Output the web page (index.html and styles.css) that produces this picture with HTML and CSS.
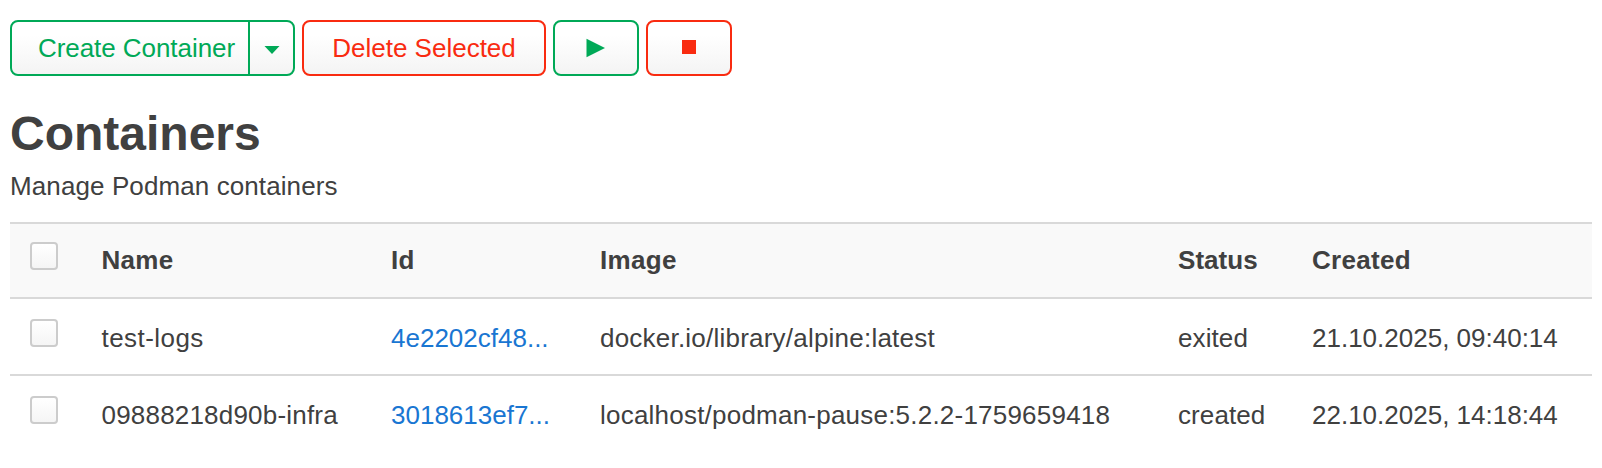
FILE: index.html
```html
<!DOCTYPE html>
<html lang="en">
<head>
<meta charset="utf-8">
<title>Containers</title>
<link rel="stylesheet" href="styles.css">
</head>
<body>
<main class="page">
  <div class="toolbar">
    <div class="btn btn-positive split">
      <span class="split-label">Create Container</span>
      <span class="split-toggle"><svg width="16" height="8" viewBox="0 0 16 8"><path d="M0.5 0H15.5L8 8Z" fill="currentColor"/></svg></span>
    </div>
    <div class="btn btn-negative btn-text">Delete Selected</div>
    <div class="btn btn-positive btn-icon"><svg width="20" height="20" viewBox="0 0 20 20"><path d="M0.5 0.8V19.2L19 10Z" fill="currentColor"/></svg></div>
    <div class="btn btn-negative btn-icon"><svg width="20" height="20" viewBox="0 0 20 20"><path d="M3 2H17V16H3Z" fill="currentColor"/></svg></div>
  </div>
  <h1 class="title">Containers</h1>
  <p class="description">Manage Podman containers</p>
  <div class="table">
    <div class="row row-head">
      <span class="check"></span><span>Name</span><span>Id</span><span>Image</span><span class="status-head">Status</span><span>Created</span>
    </div>
    <div class="row">
      <span class="check"></span><span class="name-short">test-logs</span><a class="link">4e2202cf48...</a><span class="image">docker.io/library/alpine:latest</span><span class="status">exited</span><span>21.10.2025, 09:40:14</span>
    </div>
    <div class="row">
      <span class="check"></span><span class="name">09888218d90b-infra</span><a class="link">3018613ef7...</a><span class="image">localhost/podman-pause:5.2.2-1759659418</span><span class="status">created</span><span>22.10.2025, 14:18:44</span>
    </div>
  </div>
</main>
</body>
</html>
```
FILE: styles.css
```css
* { box-sizing: border-box; }
body {
  margin: 0;
  background: #fff;
  color: #404040;
  font: 26px/36px "Helvetica Neue", "Liberation Sans", Arial, sans-serif;
}
.page { padding: 20px 10px 0; }
.toolbar { display: flex; gap: 7px; height: 56px; }
.btn {
  display: flex;
  align-items: center;
  justify-content: center;
  height: 56px;
  border: 2px solid currentColor;
  border-radius: 8px;
  background: linear-gradient(#fff, #fff 25%, #f4f4f4);
  white-space: nowrap;
}
.btn-positive { color: #00a957; }
.btn-negative { color: #f92b10; }
.btn-text { width: 244px; padding-bottom: 1px; }
.btn-icon { width: 86px; }
.split { width: 285px; }
.split-label { flex: 1; padding: 0 0 1px 26px; letter-spacing: -0.06px; }
.split-toggle {
  display: flex;
  align-items: center;
  justify-content: center;
  width: 45px;
  height: 100%;
  padding-top: 4px;
  border-left: 2px solid currentColor;
}
.title {
  margin: 22px 0 0;
  font-size: 48px;
  line-height: 72px;
  font-weight: 700;
}
.description { margin: -2px 0 0; letter-spacing: 0.1px; }
.table { margin-top: 18px; }
.row {
  display: grid;
  grid-template-columns: 71.5px 289.5px 209px 578px 134px 1fr;
  align-items: start;
  height: 77px;
  padding: 21px 0 0 20px;
  border-bottom: 2px solid #d9d9d9;
  white-space: nowrap;
}
.row:last-child { border-bottom: 0; }
.row-head {
  padding-top: 18px;
  border-top: 2px solid #d9d9d9;
  background: #f9f9f9;
  font-weight: 700;
  letter-spacing: 0.3px;
}
.check {
  width: 28px;
  height: 28px;
  margin-top: -1px;
  border: 2px solid #ccc;
  border-radius: 4px;
  background: linear-gradient(#fff, #f5f5f5);
}
.row-head .check { margin-top: 0; }
.link { color: #1976d2; }
.image { letter-spacing: 0.22px; }
.name { letter-spacing: 0.2px; }
.name-short { letter-spacing: 0.45px; }
.status { letter-spacing: 0.1px; }
.status-head { letter-spacing: 0.05px; }
```
